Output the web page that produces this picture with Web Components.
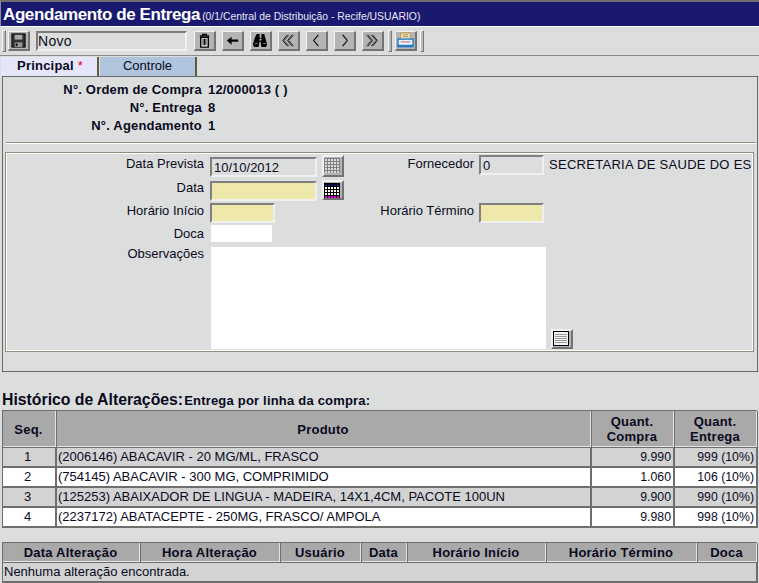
<!DOCTYPE html>
<html lang="pt">
<head>
<meta charset="utf-8">
<title>Agendamento de Entrega</title>
<style>
  html, body { margin: 0; padding: 0; background: #dcdedd; overflow: hidden; }
  body { width: 759px; height: 583px; font-family: "Liberation Sans", Arial, sans-serif; font-size: 13px; color: #0a0a1e; }
</style>
</head>
<body>
<app-title subtitle="(0/1/Central de Distribuição - Recife/USUARIO)">Agendamento de Entrega</app-title>

<app-toolbar>
  <tool-button icon="save"></tool-button>
  <span slot="status">Novo</span>
  <tool-button slot="actions" icon="trash"></tool-button>
  <tool-button slot="actions" icon="back"></tool-button>
  <tool-button slot="actions" icon="find"></tool-button>
  <tool-button slot="actions" icon="first"></tool-button>
  <tool-button slot="actions" icon="prev"></tool-button>
  <tool-button slot="actions" icon="next"></tool-button>
  <tool-button slot="actions" icon="last"></tool-button>
  <tool-button slot="print" icon="print"></tool-button>
</app-toolbar>

<app-tabs>
  <app-tab active>Principal <span style="color:#e00000;font-weight:400">*</span></app-tab>
  <app-tab>Controle</app-tab>
</app-tabs>

<app-panel>
  <info-row label="N°. Ordem de Compra">12/000013 ( )</info-row>
  <info-row label="N°. Entrega">8</info-row>
  <info-row label="N°. Agendamento">1</info-row>
  <delivery-form slot="form"></delivery-form>
</app-panel>

<app-heading sub="Entrega por linha da compra:">Histórico de Alterações:</app-heading>

<data-grid cols="54px 535px 83px 83px" rows="37px">
  <grid-cell head>Seq.</grid-cell><grid-cell head>Produto</grid-cell><grid-cell head>Quant.<br>Compra</grid-cell><grid-cell head>Quant.<br>Entrega</grid-cell>
  <grid-cell tone="gray" align="center">1</grid-cell><grid-cell tone="gray">(2006146) ABACAVIR - 20 MG/ML, FRASCO</grid-cell><grid-cell tone="gray" align="right">9.990</grid-cell><grid-cell tone="gray" align="right">999 (10%)</grid-cell>
  <grid-cell align="center">2</grid-cell><grid-cell>(754145) ABACAVIR - 300 MG, COMPRIMIDO</grid-cell><grid-cell align="right">1.060</grid-cell><grid-cell align="right">106 (10%)</grid-cell>
  <grid-cell tone="gray" align="center">3</grid-cell><grid-cell tone="gray">(125253) ABAIXADOR DE LINGUA - MADEIRA, 14X1,4CM, PACOTE 100UN</grid-cell><grid-cell tone="gray" align="right">9.900</grid-cell><grid-cell tone="gray" align="right">990 (10%)</grid-cell>
  <grid-cell align="center">4</grid-cell><grid-cell>(2237172) ABATACEPTE - 250MG, FRASCO/ AMPOLA</grid-cell><grid-cell align="right">9.980</grid-cell><grid-cell align="right">998 (10%)</grid-cell>
</data-grid>

<data-grid class="second" cols="138px 140px 81px 46px 139px 151px 60px" rows="20px">
  <grid-cell head>Data Alteração</grid-cell><grid-cell head>Hora Alteração</grid-cell><grid-cell head>Usuário</grid-cell><grid-cell head>Data</grid-cell><grid-cell head>Horário Início</grid-cell><grid-cell head>Horário Término</grid-cell><grid-cell head>Doca</grid-cell>
  <grid-cell tone="gray" span="7">Nenhuma alteração encontrada.</grid-cell>
</data-grid>

<script>
// calendario: 5 x 5 celulas de 2px, a ultima linha muda de cor quando ativo
function calendar(bg, cell, head, foot) {
  let out = `<rect x="0" y="1" width="16" height="15" fill="${bg}"/>`;
  for (let r = 0; r < 5; r++) {
    for (let c = 0; c < 5; c++) {
      const fill = r === 0 ? head : r === 4 ? foot : cell;
      out += `<rect x="${1 + c * 3}" y="${2 + r * 3}" width="2" height="2" fill="${fill}"/>`;
    }
  }
  return out;
}

const ICONS = {
  save: `<rect x="4" y="3" width="14" height="14" fill="#333" stroke="#000"/><rect x="7" y="4" width="8" height="5" fill="#aaa"/><rect x="7" y="12" width="8" height="5" fill="#999"/><rect x="8" y="13" width="2" height="3" fill="#111"/>`,
  trash: `<path d="M6 5h10M9 5V3.5h4V5" fill="none" stroke="#000" stroke-width="1.3"/><path d="M7 6.5h8V17H7z" fill="#eee" stroke="#000" stroke-width="1.5"/><path d="M9.5 8v7M11 8v7M12.5 8v7" stroke="#000"/>`,
  back: `<path d="M5 10l5-4v3h7v2.400h-7v3z" fill="#000"/>`,
  find: `<path d="M7 3h3v4h2V3h3l1 4 2 7-1 3h-5l-1-6h-1l-1 6H4l-1-3 2-7z" fill="#000"/><rect x="10" y="8" width="2" height="2" fill="#bbb"/><path d="M5 13h3M14 13h3" stroke="#888"/>`,
  first: `<path d="M10 4l-5 6 5 6M15 4l-5 6 5 6" fill="none" stroke="#000" stroke-width="1"/><path d="M11.500 4l-5 6 5 6M16.500 4l-5 6 5 6" fill="none" stroke="#000" stroke-width=".6"/>`,
  prev: `<path d="M13 4l-5 6 5 6" fill="none" stroke="#000" stroke-width="1.100"/>`,
  next: `<path d="M9 4l5 6-5 6" fill="none" stroke="#000" stroke-width="1.100"/>`,
  last: `<path d="M6 4l5 6-5 6M11 4l5 6-5 6" fill="none" stroke="#000" stroke-width="1"/><path d="M4.500 4l5 6-5 6M9.500 4l5 6-5 6" fill="none" stroke="#000" stroke-width=".6"/>`,
  print: `<path d="M6 2h10v7H6z" fill="#f4eec4" stroke="#c09040"/><path d="M8 4h6M8 6h6" stroke="#a08050"/><rect x="3" y="8.500" width="16" height="8" fill="#e8f2fb" stroke="#2a78c8" stroke-width="1.500"/><path d="M6 11.500h10" stroke="#c06060"/><path d="M3 15.500h16" stroke="#2a78c8" stroke-width="2"/>`,
  calOff: calendar('#808080', '#dcdcdc', '#dcdcdc', '#dcdcdc'),
  calOn: calendar('#000', '#fff', '#101060', '#e000e0'),
  note: `<rect x=".5" y=".5" width="15" height="14" fill="#f4f4f4" stroke="#000"/><path d="M2 3.500h12M2 5.500h12M2 7.500h12M2 9.500h12M2 11.500h12" stroke="#999"/>`
};

const VIEW = { calOff: '0 0 18 18', calOn: '0 0 18 16', note: '0 0 18 16' };

class AppTitle extends HTMLElement {
  constructor() {
    super();
    this.attachShadow({ mode: 'open' }).innerHTML = `
      <style>
        :host { display: flex; align-items: baseline; box-sizing: border-box; height: 27px; padding: 3px 0 0 2px; background: #191970; color: #fff; border-top: 2px solid #6e6e6e; border-bottom: 1px solid #fff; border-left: 1px solid #8e8e8e; }
        b { font-size: 17px; line-height: 20px; letter-spacing: -.4px; }
        small { font-size: 10.4px; margin-left: 2px; color: #e8e8f0; }
      </style>
      <b><slot></slot></b><small>${this.getAttribute('subtitle') || ''}</small>`;
  }
}

class ToolButton extends HTMLElement {
  constructor() {
    super();
    const icon = this.getAttribute('icon');
    const large = icon in VIEW;
    this.attachShadow({ mode: 'open' }).innerHTML = `
      <style>
        :host { display: block; box-sizing: border-box; width: var(--w, 22px); height: var(--h, 20px); background: #b4b4b4; border-style: solid; border-width: ${large ? '2px' : '1px 2px 2px 1px'}; border-color: #f2f2f2 #737373 #737373 #f2f2f2; }
        svg { display: block; width: 100%; height: 100%; }
      </style>
      <svg viewBox="${VIEW[icon] || '1 1 20 18'}" aria-hidden="true">${ICONS[icon] || ''}</svg>`;
  }
}

class AppToolbar extends HTMLElement {
  constructor() {
    super();
    this.attachShadow({ mode: 'open' }).innerHTML = `
      <style>
        :host { display: flex; align-items: center; box-sizing: border-box; height: 29px; padding: 4px 0 4px 2px; border-bottom: 1px solid #8c8c8c; }
        .grip { width: 2px; height: 20px; border: 1px solid; border-color: #f4f4f4 #777 #777 #f4f4f4; background: #bbb; }
        .status { box-sizing: border-box; width: 151px; height: 20px; margin: 0 7px 0 6px; line-height: 16px; font-size: 14px; letter-spacing: .3px; background: #dcdedd; border: 2px solid; border-color: #7c7c7c #f0f0f0 #f0f0f0 #7c7c7c; }
        .group { display: flex; gap: 6px; }
        .print { margin: 0 3px; }
      </style>
      <div class="grip"></div>
      <div style="margin-left:2px"><slot></slot></div>
      <div class="status"><slot name="status"></slot></div>
      <div class="group"><slot name="actions"></slot></div>
      <div class="grip" style="margin-left:4px"></div>
      <div class="print"><slot name="print"></slot></div>
      <div class="grip"></div>`;
  }
}

class AppTabs extends HTMLElement {
  constructor() {
    super();
    this.attachShadow({ mode: 'open' }).innerHTML = `
      <style>:host { display: flex; height: 20px; padding: 1px 0 0 1px; box-sizing: border-box; }</style>
      <slot></slot>`;
  }
}

class AppTab extends HTMLElement {
  constructor() {
    super();
    this.attachShadow({ mode: 'open' }).innerHTML = `
      <style>
        :host { display: block; box-sizing: border-box; width: 98px; text-align: center; line-height: 18px; background: #b0c4de; border-right: 2px solid #5c5c40; border-left: 1px solid #dcdedd; }
        :host([active]) { background: #e6e6fa; font-weight: 700; letter-spacing: .2px; border-left: 0; padding-left: 2px; }
      </style>
      <slot></slot>`;
  }
}

class AppPanel extends HTMLElement {
  constructor() {
    super();
    this.attachShadow({ mode: 'open' }).innerHTML = `
      <style>
        :host { display: block; box-sizing: border-box; width: 756px; height: 296px; margin-left: 2px; border: 1px solid #6a6a6a; padding-top: 2px; }
        .info { height: 54px; padding-top: 2px; }
        hr { height: 0; margin: 7px 1px 8px 3px; border: 0; border-top: 1px solid #8e8e7e; border-bottom: 1px solid #fff; }
      </style>
      <div class="info"><slot></slot></div>
      <hr>
      <slot name="form"></slot>`;
  }
}

class InfoRow extends HTMLElement {
  constructor() {
    super();
    this.attachShadow({ mode: 'open' }).innerHTML = `
      <style>
        :host { display: grid; grid-template-columns: 199px auto; column-gap: 6px; height: 18px; line-height: 18px; font-weight: 700; letter-spacing: .18px; }
        span { text-align: right; }
      </style>
      <span>${this.getAttribute('label')}</span><div><slot></slot></div>`;
  }
}

class FormField extends HTMLElement {
  constructor() {
    super();
    this.attachShadow({ mode: 'open' }).innerHTML = `
      <style>
        :host { display: block; box-sizing: border-box; height: 20px; line-height: 18px; padding-left: 2px; background: #dcdedd; border: 2px solid; border-color: #808080 #f0f0f0 #f0f0f0 #808080; white-space: nowrap; }
        :host([kind="required"]) { background: #eee8aa; }
        :host([kind="plain"]) { background: #fff; border: 0; height: 17px; }
      </style>
      <slot></slot>`;
  }
}

class DeliveryForm extends HTMLElement {
  constructor() {
    super();
    this.attachShadow({ mode: 'open' }).innerHTML = `
      <style>
        :host { display: block; box-sizing: border-box; width: 749px; height: 200px; margin-left: 2px; border: 1px solid #8e8e7e; outline: 1px solid #fff; outline-offset: -2px; }
        .grid { display: grid; grid-template-columns: 204px 112px 22px 135px 70px 1fr; grid-template-rows: 24px 24px 22px 22px 102px; padding-top: 2px; }
        .lbl { text-align: right; padding-right: 6px; line-height: 16px; white-space: nowrap; }
        .r { padding-right: 5px; }
        .w107 { width: 107px; }
        .w65 { width: 65px; }
        tool-button { --w: 22px; --h: 22px; }
        .txt { line-height: 18px; white-space: nowrap; overflow: hidden; letter-spacing: .28px; }
        .obs { grid-column: 2 / 6; width: 335px; height: 102px; margin-left: 1px; background: #fff; }
        .btn2 { align-self: end; margin: 0 0 0 2px; }
      </style>
      <div class="grid">
        <div class="lbl" style="padding-top:1px">Data Prevista</div>
        <form-field class="w107" style="margin-top:2px">10/10/2012</form-field>
        <tool-button icon="calOff"></tool-button>
        <div class="lbl r" style="padding-top:1px">Fornecedor</div>
        <form-field class="w65">0</form-field>
        <div class="txt" style="padding-top:1px">SECRETARIA DE SAUDE DO ES</div>

        <div class="lbl" style="padding-top:1px">Data</div>
        <form-field class="w107" kind="required" style="margin-top:2px"></form-field>
        <tool-button icon="calOn" style="--h:20px;margin-top:1px"></tool-button>
        <div></div><div></div><div></div>

        <div class="lbl">Horário Início</div>
        <form-field class="w65" kind="required"></form-field>
        <div></div>
        <div class="lbl r">Horário Término</div>
        <form-field class="w65" kind="required"></form-field>
        <div></div>

        <div class="lbl" style="padding-top:1px">Doca</div>
        <form-field style="width:61px;margin-left:1px" kind="plain"></form-field>
        <div></div><div></div><div></div><div></div>

        <div class="lbl" style="margin-top:-1px">Observações</div>
        <div class="obs"></div>
        <tool-button class="btn2" icon="note" style="--h:20px"></tool-button>
      </div>`;
  }
}

class AppHeading extends HTMLElement {
  constructor() {
    super();
    this.attachShadow({ mode: 'open' }).innerHTML = `
      <style>
        :host { display: flex; align-items: baseline; box-sizing: border-box; height: 38px; padding: 19px 0 0 2px; font-weight: 700; }
        b { font-size: 15.8px; line-height: 18px; }
        span { font-size: 13px; letter-spacing: .2px; margin-left: 1px; }
      </style>
      <b><slot></slot></b><span>${this.getAttribute('sub') || ''}</span>`;
  }
}

class DataGrid extends HTMLElement {
  constructor() {
    super();
    this.attachShadow({ mode: 'open' }).innerHTML = `
      <style>
        :host { display: grid; grid-template-columns: ${this.getAttribute('cols')}; grid-template-rows: ${this.getAttribute('rows')}; grid-auto-rows: 20px; box-sizing: border-box; width: 755px; margin-left: 2px; border-top: 1px solid #6e6e6e; border-left: 1px solid #6e6e6e; }
        :host(.second) { margin-top: 14px; }
      </style>
      <slot></slot>`;
  }
}

class GridCell extends HTMLElement {
  constructor() {
    super();
    const span = this.getAttribute('span');
    if (span) this.style.gridColumn = `span ${span}`;
    this.attachShadow({ mode: 'open' }).innerHTML = `
      <style>
        :host { display: block; box-sizing: border-box; padding: 0 2px 0 1px; line-height: 18px; background: #fff; border-right: 2px solid #6e6e6e; border-bottom: 2px solid #6e6e6e; white-space: nowrap; }
        :host([tone="gray"]) { background: #d3d3d3; }
        :host([align="center"]) { text-align: center; padding-right: 4px; }
        :host([align="right"]) { text-align: right; font-size: 12.3px; }
        :host([head]) { display: flex; align-items: center; justify-content: center; text-align: center; background: #a9a9a9; font-weight: 700; line-height: 15px; letter-spacing: .22px; padding-right: 3px; border-right: 1px solid #6e6e6e; border-bottom: 1px solid #6e6e6e; box-shadow: inset -1px -1px 0 #e4e4e4; }
      </style>
      <div><slot></slot></div>`;
  }
}

customElements.define('app-title', AppTitle);
customElements.define('tool-button', ToolButton);
customElements.define('app-toolbar', AppToolbar);
customElements.define('app-tabs', AppTabs);
customElements.define('app-tab', AppTab);
customElements.define('app-panel', AppPanel);
customElements.define('info-row', InfoRow);
customElements.define('form-field', FormField);
customElements.define('delivery-form', DeliveryForm);
customElements.define('app-heading', AppHeading);
customElements.define('data-grid', DataGrid);
customElements.define('grid-cell', GridCell);
</script>
</body>
</html>
